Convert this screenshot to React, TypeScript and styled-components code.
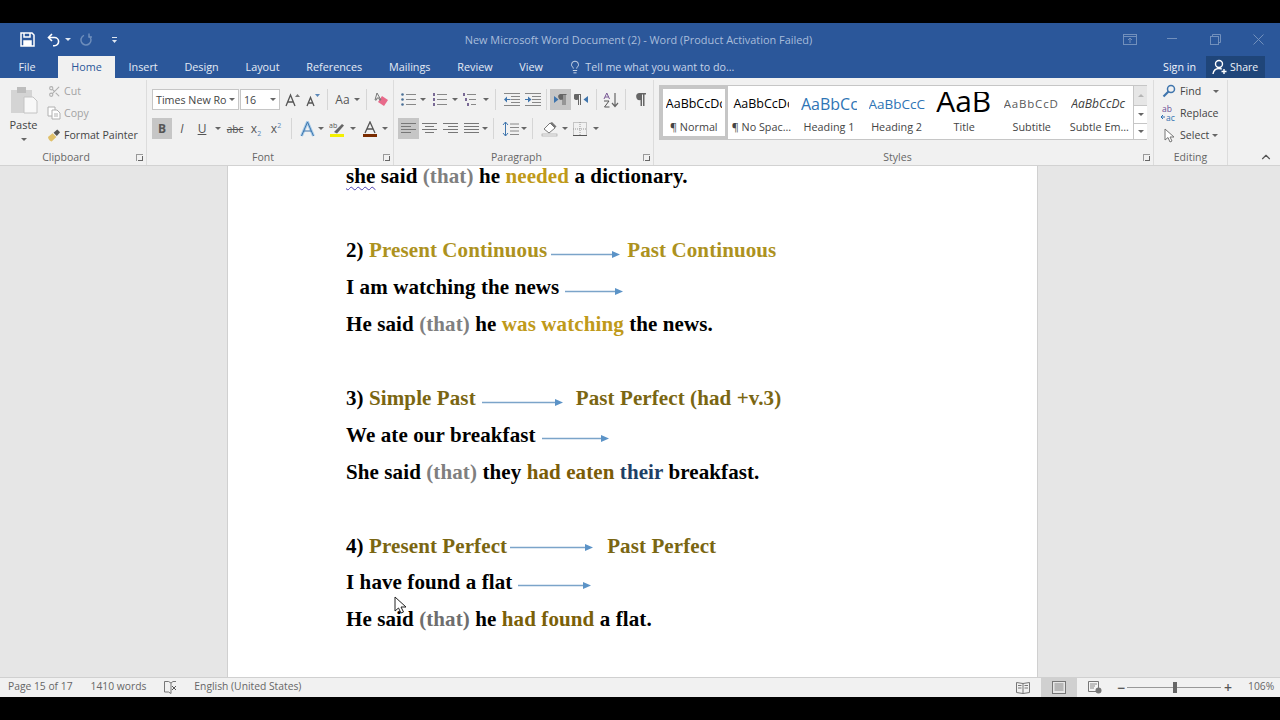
import * as React from 'react';
import styled, { createGlobalStyle } from 'styled-components';
import { Lightbulb, Scissors, ChevronUp } from 'lucide-react';

const GlobalStyle = createGlobalStyle`
  html, body {
    margin: 0;
    padding: 0;
    background: #000;
    overflow: hidden;
  }
  * { box-sizing: border-box; }
`;

const Screen = styled.div`
  width: 1280px;
  height: 720px;
  display: flex;
  flex-direction: column;
  padding: 23px 0;
  background: #000;
  font-family: "Open Sans", "Noto Sans", sans-serif;
  font-size: 11px;
  color: #444;
`;

/* title bar */
const TitleBar = styled.div`
  height: 32px;
  flex: none;
  background: #2b579a;
  display: grid;
  grid-template-columns: 1fr auto 1fr;
  align-items: center;
`;
const Quick = styled.div`
  display: flex;
  align-items: center;
  padding-left: 20px;
  padding-top: 1px;
`;
const DocTitle = styled.div`
  color: #a9bddb;
  font-size: 10.9px;
  margin-right: 3px;
  white-space: nowrap;
`;
const WinButtons = styled.div`
  display: flex;
  justify-content: flex-end;
  align-items: center;
`;
const WinBtn = styled.div`
  width: 43px;
  display: flex;
  justify-content: center;
`;
const QuickBtn = styled.div<{ $w: number }>`
  width: ${p => p.$w}px;
  display: flex;
  align-items: center;
`;
const WhiteCaret = styled.div`
  border-left: 3px solid transparent;
  border-right: 3px solid transparent;
  border-top: 3px solid #dfe7f2;
`;

/* tabs */
const TabBar = styled.div`
  height: 23px;
  flex: none;
  background: #2b579a;
  display: flex;
  align-items: flex-end;
  padding-left: 5px;
`;
const Tab = styled.div<{ $active?: boolean; $mr?: number }>`
  height: 22px;
  padding: 0 13.4px 1px;
  margin-right: ${p => p.$mr ?? 0}px;
  display: flex;
  align-items: center;
  white-space: nowrap;
  font-size: 10.8px;
  background: ${p => (p.$active ? '#f1f1f1' : 'transparent')};
  color: ${p => (p.$active ? '#2b579a' : '#e4ebf5')};
`;
const TellMe = styled.div`
  height: 22px;
  padding-bottom: 1px;
  display: flex;
  align-items: center;
  gap: 3px;
  margin-left: 12px;
  color: #c5d3e8;
  font-size: 10.7px;
  white-space: nowrap;
`;
const TabRight = styled.div`
  margin-left: auto;
  display: flex;
  align-items: center;
  height: 22px;
  padding-right: 15px;
  color: #f0f4fa;
`;
const SignIn = styled.div`
  margin-right: 10px;
  padding-bottom: 1px;
  font-size: 10.7px;
`;
const Share = styled.div`
  height: 22px;
  width: 59px;
  display: flex;
  align-items: center;
  gap: 2px;
  padding: 0 0 1px 6px;
  background: #1f4579;
  font-size: 10.5px;
`;

/* ribbon */
const Ribbon = styled.div`
  height: 88px;
  flex: none;
  background: #f1f1f1;
  border-bottom: 1px solid #d2d2d2;
  display: flex;
`;
const Group = styled.div<{ $w: number }>`
  width: ${p => p.$w}px;
  flex: none;
  display: flex;
  flex-direction: column;
  position: relative;
  margin: 2px 0 0;
  border-right: 1px solid #dcdcdc;
`;
const GroupBody = styled.div`
  flex: 1;
  display: flex;
  min-height: 0;
`;
const GroupLabel = styled.div<{ $pr?: number }>`
  height: 17px;
  flex: none;
  padding-right: ${p => p.$pr ?? 0}px;
  text-align: center;
  font-size: 10.5px;
  line-height: 19px;
  color: #666;
`;
const Launcher = styled.div`
  position: absolute;
  right: 3px;
  bottom: 4px;
  width: 7px;
  height: 7px;
  border-left: 1px solid #999;
  border-top: 1px solid #999;
  &::after {
    content: '';
    position: absolute;
    right: 0;
    bottom: 0;
    width: 4px;
    height: 4px;
    border-right: 1px solid #666;
    border-bottom: 1px solid #666;
  }
`;
const PasteCol = styled.div`
  width: 47px;
  flex: none;
  display: flex;
  flex-direction: column;
  align-items: center;
  padding-top: 6px;
  font-size: 11px;
  color: #444;
`;
const PasteLabel = styled.div`
  margin-top: 3px;
  line-height: 15px;
`;
const SmallCol = styled.div`
  display: flex;
  flex-direction: column;
`;
const SmallRow = styled.div<{ $dim?: boolean }>`
  height: 22px;
  display: flex;
  align-items: center;
  gap: 3px;
  white-space: nowrap;
  font-size: 10.6px;
  color: ${p => (p.$dim ? '#a3a3a3' : '#444')};
`;
const Slot = styled.div<{ $w: number }>`
  width: ${p => p.$w}px;
  flex: none;
  display: flex;
  align-items: center;
  justify-content: center;
`;
const Stack = styled.div<{ $pl: number }>`
  display: flex;
  flex-direction: column;
  padding: 9px 0 0 ${p => p.$pl}px;
  gap: 8px;
`;
const ToolRow = styled.div`
  height: 21px;
  display: flex;
  align-items: center;
`;
const Combo = styled.div<{ $w: number }>`
  width: ${p => p.$w}px;
  height: 21px;
  flex: none;
  margin-right: 1px;
  display: flex;
  align-items: center;
  justify-content: space-between;
  padding: 0 3px;
  background: #fff;
  border: 1px solid #c6c6c6;
  font-size: 10.7px;
  color: #444;
  white-space: nowrap;
  overflow: hidden;
`;
const Cell = styled.div<{ $w: number; $on?: boolean; $ml?: number }>`
  width: ${p => p.$w}px;
  height: 21px;
  flex: none;
  margin-left: ${p => p.$ml ?? 0}px;
  display: flex;
  align-items: center;
  justify-content: center;
  background: ${p => (p.$on ? '#c6c6c6' : 'transparent')};
`;
const Glyph = styled.span<{ $bold?: boolean; $italic?: boolean; $under?: boolean; $strike?: boolean; $size?: number }>`
  font-family: "Open Sans", sans-serif;
  font-size: ${p => p.$size ?? 12}px;
  font-weight: ${p => (p.$bold ? 700 : 400)};
  font-style: ${p => (p.$italic ? 'italic' : 'normal')};
  text-decoration: ${p => (p.$under ? 'underline' : p.$strike ? 'line-through' : 'none')};
  color: #555;
  sup, sub { font-size: 7px; line-height: 0; color: #5a87b8; }
`;
const Caret = styled.div`
  flex: none;
  border-left: 3px solid transparent;
  border-right: 3px solid transparent;
  border-top: 3px solid #666;
`;
const Sep = styled.div<{ $mx?: number }>`
  width: 1px;
  height: 21px;
  flex: none;
  margin: 0 ${p => p.$mx ?? 5}px;
  background: #d6d6d6;
`;

/* styles gallery */
const Gallery = styled.div`
  width: 488px;
  height: 55px;
  margin: 5px 0 0 5px;
  display: flex;
  background: #fff;
  border: 1px solid #c6c6c6;
`;
const StyleItem = styled.div<{ $selected?: boolean }>`
  width: 67.6px;
  flex: none;
  display: flex;
  flex-direction: column;
  align-items: center;
  overflow: hidden;
  border: 3px solid ${p => (p.$selected ? '#c6c6c6' : 'transparent')};
`;
const StylePreview = styled.div<{ $size: number; $color: string; $italic?: boolean; $spacing?: number; $clipTop?: number; $lift?: number }>`
  height: ${p => 29 - (p.$clipTop ?? 0)}px;
  margin-top: ${p => p.$clipTop ?? 0}px;
  padding-bottom: ${p => p.$lift ?? 0}px;
  width: 56px;
  display: flex;
  align-items: center;
  justify-content: flex-start;
  overflow: hidden;
  white-space: nowrap;
  font-size: ${p => p.$size}px;
  font-style: ${p => (p.$italic ? 'italic' : 'normal')};
  letter-spacing: ${p => p.$spacing ?? 0}px;
  color: ${p => p.$color};
`;
const StyleName = styled.div`
  white-space: nowrap;
  font-size: 10.8px;
  line-height: 18px;
  color: #444;
`;
const GalleryScroll = styled.div`
  margin-left: auto;
  width: 14px;
  flex: none;
  display: flex;
  flex-direction: column;
  border-left: 1px solid #c6c6c6;
`;
const ScrollBtn = styled.div<{ $h: number; $dim?: boolean }>`
  height: ${p => p.$h}px;
  display: flex;
  align-items: center;
  justify-content: center;
  background: ${p => (p.$dim ? '#e6e6e6' : '#fff')};
  & + & { border-top: 1px solid #c6c6c6; }
`;
const UpCaret = styled.div`
  border-left: 3px solid transparent;
  border-right: 3px solid transparent;
  border-bottom: 3px solid #b5b5b5;
`;
const EditCol = styled.div`
  display: flex;
  flex-direction: column;
  padding-left: 7px;
`;
const CollapseSlot = styled.div`
  flex: 1;
  display: flex;
  justify-content: flex-end;
  align-items: flex-end;
  padding: 0 7px 1px 0;
  color: #555;
`;

/* document */
const DocArea = styled.div`
  flex: 1;
  min-height: 0;
  position: relative;
  overflow: hidden;
  display: flex;
  padding-left: 227px;
  background: #e6e6e6;
`;
const Page = styled.div`
  width: 811px;
  background: #fff;
  border-left: 1px solid #d0d0d0;
  border-right: 1px solid #d0d0d0;
  padding-left: 118px;
  font-family: "Liberation Serif", "Times New Roman", serif;
  font-weight: 700;
  font-size: 21px;
  letter-spacing: 0.1px;
  color: #000;
`;
const Line = styled.div<{ $gapBefore?: number; $h?: number }>`
  height: ${p => p.$h ?? 37}px;
  line-height: ${p => p.$h ?? 37}px;
  margin-top: ${p => p.$gapBefore ?? 0}px;
  white-space: nowrap;
`;
const Spell = styled.span`
  text-decoration: underline wavy #4b3fb5 1px;
  text-underline-offset: 3px;
`;
const Ink = styled.span<{ $c: string }>`
  color: ${p => p.$c};
`;
const ArrowWrap = styled.svg<{ $ml: number; $mr: number; $drop: number }>`
  display: inline-block;
  margin-left: ${p => p.$ml}px;
  margin-right: ${p => p.$mr}px;
  vertical-align: ${p => -p.$drop}px;
`;
const Cursor = styled.svg`
  position: absolute;
  left: 394px;
  top: 430px;
`;

/* status bar */
const StatusBar = styled.div`
  height: 20px;
  flex: none;
  background: #f1f1f1;
  border-top: 1px solid #d0d0d0;
  display: flex;
  align-items: center;
  padding-left: 8px;
  font-size: 10.3px;
  color: #666;
`;
const StatusText = styled.div<{ $mr: number }>`
  margin-right: ${p => p.$mr}px;
  margin-bottom: 3px;
  white-space: nowrap;
`;
const StatusIcon = styled.div<{ $mr: number }>`
  display: flex;
  margin-right: ${p => p.$mr}px;
`;
const StatusRight = styled.div`
  margin-left: auto;
  height: 100%;
  display: flex;
  align-items: center;
`;
const ViewBtn = styled.div<{ $on?: boolean; $w: number }>`
  width: ${p => p.$w}px;
  height: 100%;
  display: flex;
  align-items: center;
  justify-content: center;
  background: ${p => (p.$on ? '#d0d0d0' : 'transparent')};
`;
const ZoomTrack = styled.div`
  width: 94px;
  height: 1px;
  margin: 0 3px 0 2px;
  position: relative;
  background: #999;
`;
const ZoomThumb = styled.div`
  position: absolute;
  left: 46px;
  top: -5px;
  width: 4px;
  height: 11px;
  background: #666;
`;
const ZoomSign = styled.div<{ $ml?: number }>`
  width: 8px;
  margin-left: ${p => p.$ml ?? 0}px;
  font-size: 14px;
  line-height: 14px;
  font-weight: 600;
  text-align: center;
  color: #555;
`;
const ZoomPct = styled.div`
  width: 32px;
  margin: 0 0 3px 16px;
  white-space: nowrap;
`;

const Arrow: React.FC<{ w: number; ml: number; mr?: number; drop?: number; tilt?: number }> = ({ w, ml, mr = 0, drop = 2, tilt = 0 }) => (
  <ArrowWrap width={w} height={9} viewBox={`0 0 ${w} 9`} $ml={ml} $mr={mr} $drop={drop}>
    <line x1="0" y1={4.5 + tilt} x2={w - 7} y2="4.5" stroke="#7ba4c9" strokeWidth="1.3" />
    <path d={`M${w - 8} 1 L${w} 4.5 L${w - 8} 8 Z`} fill="#5b93c7" />
  </ArrowWrap>
);

const SaveIcon = () => (
  <svg width="15" height="15" viewBox="0 0 15 15" fill="none" stroke="#fff" strokeWidth="1.5">
    <path d="M1 1h11l2 2v11H1z" />
    <path d="M4 1v4h6V1" />
    <path d="M4 14V9h7v5" fill="#fff" />
  </svg>
);
const UndoIcon = () => (
  <svg width="14" height="14" viewBox="0 0 14 14" fill="none" stroke="#fff" strokeWidth="1.6">
    <path d="M5 1 1.5 4.5 5 8" />
    <path d="M2 4.5h5.5a4 4 0 0 1 0 8.2H6" />
  </svg>
);
const RedoIcon = () => (
  <svg width="13" height="14" viewBox="0 0 13 14" fill="none" stroke="#6d8dbb" strokeWidth="1.5">
    <path d="M9 3a5 5 0 1 1-5-.6" />
    <path d="M9 .5V4h3" />
  </svg>
);
const CustomizeIcon = () => (
  <svg width="7" height="8" viewBox="0 0 7 8" fill="#dfe7f2">
    <rect x="1" y="1" width="5" height="1" />
    <path d="M1 4h5L3.5 7z" />
  </svg>
);
const PasteIcon = () => (
  <svg width="28" height="28" viewBox="0 0 28 28">
    <rect x="1" y="4" width="21" height="23" fill="#d4d4d4" />
    <rect x="7" y="1" width="9" height="6" fill="#bdbdbd" />
    <path d="M14 11h9l4 4v12H14z" fill="#f8f8f8" stroke="#c4c4c4" />
  </svg>
);
const CopyIcon = () => (
  <svg width="14" height="14" viewBox="0 0 14 14" fill="#fff" stroke="#b0b0b0">
    <path d="M1 1h7v9H1z" />
    <path d="M5 4h5l3 3v6H5z" />
    <path d="M7 8h4M7 10h4" />
  </svg>
);
const BrushIcon = () => (
  <svg width="15" height="15" viewBox="0 0 15 15">
    <path d="M1 9 6 5l4 4-5 5c-2-.5-3.5-2.5-4-5z" fill="#e0c06a" />
    <path d="M7 4.5 11 1l3 3-3.500 4z" fill="#555" />
  </svg>
);
const GrowIcon = ({ up }: { up: boolean }) => (
  <svg width="16" height="14" viewBox="0 0 16 14">
    <path d={up ? 'M1 13 5.5 2 10 13M2.800 9h5.500' : 'M1 13 4.500 4.500 8 13M2.300 10h4.500'} fill="none" stroke="#555" strokeWidth="1.3" />
    <path d={up ? 'M10 4l2.500-3L15 4z' : 'M9 1h5l-2.500 3z'} fill={up ? '#777' : '#5a87b8'} />
  </svg>
);
const EraserIcon = () => (
  <svg width="16" height="15" viewBox="0 0 16 15">
    <path d="M8 4 14 8 10 14 4 10z" fill="#e86a8a" />
    <path d="M3 1 1 8h1.500l.5-2h2l.5 2H7z" fill="none" stroke="#777" strokeWidth="1" />
  </svg>
);
const TextEffectIcon = () => (
  <svg width="15" height="16" viewBox="0 0 15 16">
    <path d="M1.500 15 7.500 1 13.500 15" fill="none" stroke="#a8cbe8" strokeWidth="3" />
    <path d="M1.500 15 7.500 1 13.500 15M4 10h7" fill="none" stroke="#3c75ad" strokeWidth="1" />
  </svg>
);
const HighlightIcon = () => (
  <svg width="16" height="16" viewBox="0 0 16 16">
    <text x="0" y="7" fontSize="7" fill="#555" fontFamily="Open Sans">ab</text>
    <path d="M5 11 13 3l2 1.500-7 8z" fill="#666" />
    <rect x="1" y="13" width="14" height="3" fill="#f4f000" />
  </svg>
);
const FontColorIcon = () => (
  <svg width="16" height="16" viewBox="0 0 16 16">
    <path d="M3 12 8 1l5 11M5 8h6" fill="none" stroke="#555" strokeWidth="1.300" />
    <rect x="1" y="13" width="14" height="3" fill="#7a2c00" />
  </svg>
);
const Lines: React.FC<{ rows: [number, number][] }> = ({ rows }) => (
  <svg width="15" height="13" viewBox="0 0 15 13" fill="#777">
    {rows.map(([x, len], i) => (
      <rect key={i} x={x} y={1 + i * 3} width={len} height="1" />
    ))}
  </svg>
);
const ListIcon: React.FC<{ kind: 'bullet' | 'number' | 'multi' }> = ({ kind }) => (
  <svg width="15" height="14" viewBox="0 0 15 14">
    {[1, 6, 11].map((y, i) => (
      <React.Fragment key={y}>
        <rect x={kind === 'multi' ? 4 + i * 2 : 5} y={y} width={kind === 'multi' ? 9 - i * 2 : 10} height="1" fill="#888" />
        {kind === 'bullet' ? (
          <circle cx="1.500" cy={y + 0.5} r="1.300" fill="#4a6f96" />
        ) : (
          <rect x={kind === 'multi' ? i * 2 : 1} y={y - 1} width="2" height="3" fill="#7a6a96" />
        )}
      </React.Fragment>
    ))}
  </svg>
);
const IndentIcon = ({ rtl }: { rtl?: boolean }) => (
  <svg width="16" height="13" viewBox="0 0 16 13">
    {[0, 3, 6, 9, 12].map(y => (
      <rect key={y} x={y === 0 || y === 12 ? 0 : 7} y={y} width={y === 0 || y === 12 ? 16 : 9} height="1" fill="#888" />
    ))}
    <path d={rtl ? 'M0 6h3V3.500L6.500 6.500 3 9.500V7H0z' : 'M6.500 6H3V3.500L0 6.500l3 3V7h3.500z'} fill="#3f75ad" />
  </svg>
);
const PilcrowDir = ({ rtl }: { rtl?: boolean }) => (
  <svg width="15" height="11" viewBox="0 0 15 11" fill="#666">
    {rtl ? (
      <>
        <path d="M1 0h6v11H6V1H5v10H4V5.500A3 3 0 0 1 1 0z" />
        <path d="M14 2v7L9.500 5.500z" fill="#3f75ad" />
      </>
    ) : (
      <>
        <path d="M7 0h6.500v1H12.500v10h-1V1h-1v10h-1V5.500A3 3 0 0 1 7 0z" />
        <path d="M1 2v7l4.500-3.500z" fill="#3f75ad" />
      </>
    )}
  </svg>
);
const SortIcon = () => (
  <svg width="17" height="16" viewBox="0 0 17 16">
    <path d="M1 7 3.800 1 6.500 7M2 5h3.500" fill="none" stroke="#7a5a96" />
    <path d="M1 9h5L1.500 15h5" fill="none" stroke="#555" />
    <path d="M12 1v13M9 11l3 3.500 3-3.500" fill="none" stroke="#666" strokeWidth="1.200" />
  </svg>
);
const LineSpacingIcon = () => (
  <svg width="17" height="16" viewBox="0 0 17 16">
    <path d="M3.500 1v14M1 4l2.500-3L6 4M1 12l2.500 3L6 12" fill="none" stroke="#3f75ad" />
    <path d="M8 3h9M8 6.500h9M8 10h9M8 13.500h9" stroke="#888" />
  </svg>
);
const ShadingIcon = () => (
  <svg width="18" height="16" viewBox="0 0 18 16">
    <path d="M3 8 9 2l5 5-6 5z" fill="#fff" stroke="#777" />
    <path d="M9 2l5 5 1.500-1.500L11 1z" fill="#777" />
    <rect x="1" y="13" width="15" height="2" fill="#f4f4f4" stroke="#999" strokeWidth=".6" />
  </svg>
);
const BordersIcon = () => (
  <svg width="14" height="14" viewBox="0 0 14 14" fill="none" stroke="#999" strokeDasharray="1 1">
    <rect x=".5" y=".5" width="13" height="13" />
    <path d="M7 0v14M0 7h14" />
    <path d="M0 13.500h14" stroke="#555" strokeDasharray="none" />
  </svg>
);
const PilcrowIcon = () => (
  <svg width="11" height="13" viewBox="0 0 11 13" fill="#666">
    <path d="M4 0h7v1.500H9.500V13H8V1.500H7V13H5.500V7A3.500 3.500 0 0 1 4 0z" />
  </svg>
);
const FindIcon = () => (
  <svg width="14" height="14" viewBox="0 0 14 14" fill="none">
    <circle cx="9" cy="5" r="3.500" stroke="#3f75ad" strokeWidth="1.500" />
    <path d="M6.500 7.500 1.500 12.500" stroke="#3f75ad" strokeWidth="2.200" />
  </svg>
);
const ReplaceIcon = () => (
  <svg width="16" height="17" viewBox="0 0 16 17" overflow="visible">
    <text x="1" y="7" fontSize="8.500" fill="#6b4f96" fontFamily="Open Sans">ab</text>
    <text x="5" y="16" fontSize="8.500" fill="#2f6fb0" fontFamily="Open Sans">ac</text>
    <path d="M0 12h4M0 12l2-2M0 12l2 2" stroke="#2f6fb0" fill="none" />
  </svg>
);
const PointerIcon = () => (
  <svg width="13" height="15" viewBox="0 0 13 15">
    <path d="M2 1v11l3-2.500L7 14l2-1-2-4h4z" fill="#fff" stroke="#777" />
  </svg>
);
const MoveOutIcon = () => (
  <svg width="14" height="11" viewBox="0 0 14 11" fill="none" stroke="#7290bc">
    <rect x=".5" y=".5" width="13" height="10" />
    <path d="M.5 2.500h13" />
    <path d="M7 9V4M5 6l2-2 2 2" />
  </svg>
);
const MinIcon = () => (
  <svg width="11" height="2" viewBox="0 0 11 2"><rect width="10" height="1" fill="#7290bc" /></svg>
);
const RestoreIcon = () => (
  <svg width="11" height="11" viewBox="0 0 11 11" fill="none" stroke="#7290bc">
    <rect x=".5" y="2.500" width="8" height="8" />
    <path d="M2.500 2.500v-2h8v8h-2" />
  </svg>
);
const CloseIcon = () => (
  <svg width="11" height="11" viewBox="0 0 11 11" stroke="#7290bc"><path d="M.5.500l10 10M10.500.500l-10 10" /></svg>
);
const ShareIcon = () => (
  <svg width="16" height="16" viewBox="0 0 16 16" fill="none" stroke="#fff" strokeWidth="1.400">
    <circle cx="7" cy="5" r="3.500" />
    <path d="M1 15c.5-3.500 2.500-5.500 6-5.500 1 0 2 .2 2.800.6" />
    <path d="M12 10v5M9.500 12.500h5" />
  </svg>
);
const ProofIcon = () => (
  <svg width="14" height="13" viewBox="0 0 14 13" fill="none" stroke="#777">
    <path d="M.5.500h4L7 2v10.500L4.500 11h-4z" />
    <path d="M7 2 9 .5h3" />
    <path d="M8 5l4 4M12 5l-4 4" stroke="#555" />
  </svg>
);
const ReadIcon = () => (
  <svg width="14" height="13" viewBox="0 0 14 13" fill="none" stroke="#777">
    <path d="M.5 1.500 7 2.500l6.500-1v10L7 12.500l-6.500-1zM7 2.500v10" />
    <path d="M2 4.500h3.500M2 7h3.500M8.500 4.500H12M8.500 7H12" />
  </svg>
);
const PrintIcon = () => (
  <svg width="14" height="13" viewBox="0 0 14 13">
    <rect x=".5" y=".5" width="13" height="12" fill="#e6e6e6" stroke="#777" />
    <path d="M2.500 3h9M2.500 5h9M2.500 7h9M2.500 9h9" stroke="#888" />
  </svg>
);
const WebIcon = () => (
  <svg width="14" height="13" viewBox="0 0 14 13">
    <path d="M.5.500h10v10H.5z" fill="#f4f4f4" stroke="#777" />
    <path d="M2 3h7M2 5h5M2 7h4" stroke="#888" />
    <circle cx="10.500" cy="9.500" r="3" fill="#777" />
  </svg>
);

const App: React.FC = () => {
  return (
    <>
      <GlobalStyle />
      <Screen>
        <TitleBar>
          <Quick>
            <QuickBtn $w={27}><SaveIcon /></QuickBtn>
            <QuickBtn $w={18}><UndoIcon /></QuickBtn>
            <QuickBtn $w={15}><WhiteCaret /></QuickBtn>
            <QuickBtn $w={31}><RedoIcon /></QuickBtn>
            <QuickBtn $w={10}><CustomizeIcon /></QuickBtn>
          </Quick>
          <DocTitle>New Microsoft Word Document (2) - Word (Product Activation Failed)</DocTitle>
          <WinButtons>
            <WinBtn><MoveOutIcon /></WinBtn>
            <WinBtn><MinIcon /></WinBtn>
            <WinBtn><RestoreIcon /></WinBtn>
            <WinBtn><CloseIcon /></WinBtn>
          </WinButtons>
        </TitleBar>
        <TabBar>
          <Tab $mr={9}>File</Tab>
          <Tab $active>Home</Tab>
          <Tab>Insert</Tab>
          <Tab>Design</Tab>
          <Tab>Layout</Tab>
          <Tab>References</Tab>
          <Tab>Mailings</Tab>
          <Tab>Review</Tab>
          <Tab>View</Tab>
          <TellMe>
            <Lightbulb size={14} color="#dfe7f2" strokeWidth={1.5} />
            Tell me what you want to do...
          </TellMe>
          <TabRight>
            <SignIn>Sign in</SignIn>
            <Share><ShareIcon />Share</Share>
          </TabRight>
        </TabBar>

        <Ribbon>
          <Group $w={147}>
            <GroupBody>
              <PasteCol>
                <PasteIcon />
                <PasteLabel>Paste</PasteLabel>
                <Caret style={{ marginTop: 6 }} />
              </PasteCol>
              <SmallCol>
                <SmallRow $dim><Slot $w={14}><Scissors size={13} color="#b0b0b0" /></Slot>Cut</SmallRow>
                <SmallRow $dim><Slot $w={14}><CopyIcon /></Slot>Copy</SmallRow>
                <SmallRow><Slot $w={14}><BrushIcon /></Slot>Format Painter</SmallRow>
              </SmallCol>
            </GroupBody>
            <GroupLabel $pr={14}>Clipboard</GroupLabel>
            <Launcher />
          </Group>

          <Group $w={247}>
            <GroupBody>
              <Stack $pl={5}>
                <ToolRow>
                  <Combo $w={87}>Times New Ro<Caret /></Combo>
                  <Combo $w={40}>16<Caret /></Combo>
                  <Cell $w={22} $ml={1}><GrowIcon up /></Cell>
                  <Cell $w={20}><GrowIcon up={false} /></Cell>
                  <Sep $mx={3} />
                  <Cell $w={23}><Glyph $size={12}>Aa</Glyph></Cell>
                  <Caret />
                  <Sep $mx={6} />
                  <Cell $w={18}><EraserIcon /></Cell>
                </ToolRow>
                <ToolRow>
                  <Cell $w={20} $on><Glyph $bold>B</Glyph></Cell>
                  <Cell $w={20}><Glyph $italic>I</Glyph></Cell>
                  <Cell $w={20}><Glyph $under>U</Glyph></Cell>
                  <Cell $w={12}><Caret /></Cell>
                  <Cell $w={22}><Glyph $strike $size={10}>abc</Glyph></Cell>
                  <Cell $w={20}><Glyph $size={12}>x<sub>2</sub></Glyph></Cell>
                  <Cell $w={20}><Glyph $size={12}>x<sup>2</sup></Glyph></Cell>
                  <Sep $mx={5} />
                  <Cell $w={20}><TextEffectIcon /></Cell>
                  <Cell $w={8}><Caret /></Cell>
                  <Cell $w={24}><HighlightIcon /></Cell>
                  <Cell $w={8}><Caret /></Cell>
                  <Cell $w={26}><FontColorIcon /></Cell>
                  <Cell $w={4}><Caret /></Cell>
                </ToolRow>
              </Stack>
            </GroupBody>
            <GroupLabel $pr={14}>Font</GroupLabel>
            <Launcher />
          </Group>

          <Group $w={260}>
            <GroupBody>
              <Stack $pl={4}>
                <ToolRow>
                  <Cell $w={21}><ListIcon kind="bullet" /></Cell>
                  <Cell $w={8}><Caret /></Cell>
                  <Cell $w={24}><ListIcon kind="number" /></Cell>
                  <Cell $w={8}><Caret /></Cell>
                  <Cell $w={23}><ListIcon kind="multi" /></Cell>
                  <Cell $w={8}><Caret /></Cell>
                  <Sep $mx={5} />
                  <Cell $w={21}><IndentIcon /></Cell>
                  <Cell $w={21}><IndentIcon rtl /></Cell>
                  <Sep $mx={3} />
                  <Cell $w={21} $on><PilcrowDir /></Cell>
                  <Cell $w={21}><PilcrowDir rtl /></Cell>
                  <Sep $mx={4} />
                  <Cell $w={20}><SortIcon /></Cell>
                  <Sep $mx={4} />
                  <Cell $w={20}><PilcrowIcon /></Cell>
                </ToolRow>
                <ToolRow>
                  <Cell $w={21} $on><Lines rows={[[0, 15], [0, 10], [0, 15], [0, 10]]} /></Cell>
                  <Cell $w={21}><Lines rows={[[0, 15], [3, 9], [0, 15], [3, 9]]} /></Cell>
                  <Cell $w={21}><Lines rows={[[0, 15], [5, 10], [0, 15], [5, 10]]} /></Cell>
                  <Cell $w={21}><Lines rows={[[0, 15], [0, 15], [0, 15], [0, 15]]} /></Cell>
                  <Cell $w={6}><Caret /></Cell>
                  <Sep $mx={5} />
                  <Cell $w={22}><LineSpacingIcon /></Cell>
                  <Cell $w={6}><Caret /></Cell>
                  <Sep $mx={5} />
                  <Cell $w={24}><ShadingIcon /></Cell>
                  <Cell $w={6}><Caret /></Cell>
                  <Cell $w={24}><BordersIcon /></Cell>
                  <Cell $w={8}><Caret /></Cell>
                </ToolRow>
              </Stack>
            </GroupBody>
            <GroupLabel $pr={14}>Paragraph</GroupLabel>
            <Launcher />
          </Group>

          <Group $w={500}>
            <GroupBody>
              <Gallery>
                <StyleItem $selected>
                  <StylePreview $size={12.5} $color="#000">AaBbCcDc</StylePreview>
                  <StyleName>¶ Normal</StyleName>
                </StyleItem>
                <StyleItem>
                  <StylePreview $size={12.5} $color="#000">AaBbCcDc</StylePreview>
                  <StyleName>¶ No Spac...</StyleName>
                </StyleItem>
                <StyleItem>
                  <StylePreview $size={16} $color="#2e74b5">AaBbCc</StylePreview>
                  <StyleName>Heading 1</StyleName>
                </StyleItem>
                <StyleItem>
                  <StylePreview $size={13.5} $color="#2e74b5">AaBbCcC</StylePreview>
                  <StyleName>Heading 2</StyleName>
                </StyleItem>
                <StyleItem>
                  <StylePreview $size={30} $color="#000" $clipTop={3} $lift={9}>AaB</StylePreview>
                  <StyleName>Title</StyleName>
                </StyleItem>
                <StyleItem>
                  <StylePreview $size={11.5} $color="#595959" $spacing={0.8}>AaBbCcD</StylePreview>
                  <StyleName>Subtitle</StyleName>
                </StyleItem>
                <StyleItem>
                  <StylePreview $size={12} $color="#404040" $italic>AaBbCcDc</StylePreview>
                  <StyleName>Subtle Em...</StyleName>
                </StyleItem>
                <GalleryScroll>
                  <ScrollBtn $h={19} $dim><UpCaret /></ScrollBtn>
                  <ScrollBtn $h={18}><Caret /></ScrollBtn>
                  <ScrollBtn $h={16}><Caret /></ScrollBtn>
                </GalleryScroll>
              </Gallery>
            </GroupBody>
            <GroupLabel $pr={12}>Styles</GroupLabel>
            <Launcher />
          </Group>

          <Group $w={74}>
            <GroupBody>
              <EditCol>
                <SmallRow><Slot $w={16}><FindIcon /></Slot>Find<Caret style={{ marginLeft: 9 }} /></SmallRow>
                <SmallRow><Slot $w={16}><ReplaceIcon /></Slot>Replace</SmallRow>
                <SmallRow><Slot $w={16}><PointerIcon /></Slot>Select<Caret /></SmallRow>
              </EditCol>
            </GroupBody>
            <GroupLabel>Editing</GroupLabel>
          </Group>

          <CollapseSlot><ChevronUp size={14} strokeWidth={2} /></CollapseSlot>
        </Ribbon>

        <DocArea>
          <Page>
            <Line $h={21}>
              <Spell>she</Spell> said <Ink $c="#7f7f7f">(that)</Ink> he <Ink $c="#bf9a1a">needed</Ink> a dictionary.
            </Line>
            <Line $gapBefore={45}>
              2) <Ink $c="#ad921e">Present Continuous</Ink>
              <Arrow w={69} ml={4} mr={7} />
              <Ink $c="#ad921e">Past Continuous</Ink>
            </Line>
            <Line>
              I am watching the news
              <Arrow w={58} ml={6} />
            </Line>
            <Line>
              He said <Ink $c="#7f7f7f">(that)</Ink> he <Ink $c="#bf9a1a">was watching</Ink> the news.
            </Line>
            <Line $gapBefore={37}>
              3) <Ink $c="#7a6612">Simple Past</Ink>
              <Arrow w={81} ml={6} mr={13} />
              <Ink $c="#7a6612">Past Perfect (had +v.3)</Ink>
            </Line>
            <Line>
              We ate our breakfast
              <Arrow w={67} ml={6} drop={1} />
            </Line>
            <Line>
              She said <Ink $c="#7f7f7f">(that)</Ink> they <Ink $c="#7a5c08">had eaten</Ink> <Ink $c="#1f3f66">their</Ink> breakfast.
            </Line>
            <Line $gapBefore={37}>
              4) <Ink $c="#7a6612">Present Perfect</Ink>
              <Arrow w={83} ml={3} mr={14} drop={-1} />
              <Ink $c="#7a6612">Past Perfect</Ink>
            </Line>
            <Line $gapBefore={-1}>
              I have found a flat
              <Arrow w={73} ml={6} drop={1} />
            </Line>
            <Line>
              He said <Ink $c="#6e6e6e">(that)</Ink> he <Ink $c="#7a6008">had found</Ink> a flat.
            </Line>
          </Page>
          <Cursor width="13" height="18" viewBox="0 0 13 18">
            <path d="M1 1v14l3.500-3 2.500 5 2.500-1-2.500-5H12z" fill="#fff" stroke="#222" />
          </Cursor>
        </DocArea>

        <StatusBar>
          <StatusText $mr={18}>Page 15 of 17</StatusText>
          <StatusText $mr={18}>1410 words</StatusText>
          <StatusIcon $mr={16}><ProofIcon /></StatusIcon>
          <StatusText $mr={0}>English (United States)</StatusText>
          <StatusRight>
            <ViewBtn $w={36}><ReadIcon /></ViewBtn>
            <ViewBtn $w={36} $on><PrintIcon /></ViewBtn>
            <ViewBtn $w={36}><WebIcon /></ViewBtn>
            <ZoomSign $ml={4}>−</ZoomSign>
            <ZoomTrack><ZoomThumb /></ZoomTrack>
            <ZoomSign>+</ZoomSign>
            <ZoomPct>106%</ZoomPct>
          </StatusRight>
        </StatusBar>
      </Screen>
    </>
  );
};

export default App;
